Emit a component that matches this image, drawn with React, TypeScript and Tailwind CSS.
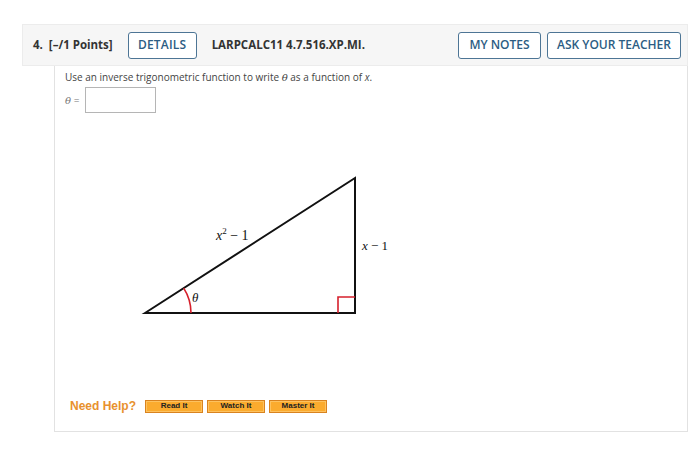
import React from "react";

export default function App() {
  const sans = { fontFamily: '"Open Sans", "Noto Sans", sans-serif' };
  return (
    <div className="w-[700px] h-[467px] bg-white overflow-hidden" style={sans}>
      <div className="pt-[24px]">
        {/* Header */}
        <div className="ml-[22px] w-[666px] h-[42px] bg-[#f6f6f6] border border-[#ececec] flex items-center pl-[10px] pr-[6px]">
          <span className="text-[11.5px] font-bold text-[#333] whitespace-pre">4.  [–/1 Points]</span>
          <button className="ml-[15px] h-[27px] w-[69px] border border-[#4d7595] rounded-[3px] bg-white text-[12px] font-semibold text-[#2c5d84] tracking-[0.2px]">
            DETAILS
          </button>
          <span className="ml-[15px] text-[11.5px] font-bold text-[#333]">LARPCALC11 4.7.516.XP.MI.</span>
          <div className="ml-auto flex gap-[6px]">
            <button className="h-[27px] w-[83px] border border-[#4d7595] rounded-[3px] bg-white text-[12px] font-semibold text-[#2c5d84]">
              MY NOTES
            </button>
            <button className="h-[27px] w-[134px] border border-[#4d7595] rounded-[3px] bg-white text-[12px] font-semibold text-[#2c5d84]">
              ASK YOUR TEACHER
            </button>
          </div>
        </div>

        {/* Content */}
        <div className="ml-[54px] w-[634px] h-[366px] border-l border-r border-b border-[#e2e2e2] pl-[10px] pt-[4px] flex flex-col">
          <p className="text-[10px] leading-[14px] text-[#444]">
            Use an inverse trigonometric function to write{" "}
            <span className="italic" style={{ fontFamily: '"DejaVu Serif", serif' }}>θ</span> as a function of{" "}
            <span className="italic">x</span>.
          </p>
          <div className="flex items-center mt-[2px] h-[26px]">
            <span className="text-[10px] text-[#777] w-[20px]">
              <span className="italic" style={{ fontFamily: '"DejaVu Serif", serif' }}>θ</span> =
            </span>
            <div className="w-[71px] h-[26px] border border-[#b5b5b5] bg-white" />
          </div>

          <svg width="350" height="200" className="ml-[65px] mt-[39px] block" viewBox="0 0 350 200">
            <polygon points="15,161 225,26 225,161" fill="none" stroke="#111" strokeWidth="2" strokeLinejoin="miter" />
            <path d="M 61 161 A 46 46 0 0 0 53.7 136.1" fill="none" stroke="#d6202c" strokeWidth="1.6" />
            <polyline points="208,161 208,145 225,145" fill="none" stroke="#d6202c" strokeWidth="1.6" />
            <text x="86" y="88" fontSize="14" fill="#111" style={{ fontFamily: '"Liberation Serif", serif' }}>
              <tspan fontStyle="italic">x</tspan>
              <tspan dy="-6" fontSize="9">2</tspan>
              <tspan dy="6"> − 1</tspan>
            </text>
            <text x="232" y="98" fontSize="13" fill="#111" style={{ fontFamily: '"Liberation Serif", serif' }}>
              <tspan fontStyle="italic">x</tspan>
              <tspan> − 1</tspan>
            </text>
            <text x="62" y="150" fontSize="13" fontStyle="italic" fill="#111" style={{ fontFamily: '"Liberation Serif", serif' }}>
              θ
            </text>
          </svg>

          <div className="flex items-center mt-[45px] pl-[5px]" style={{ fontFamily: '"Liberation Sans", Arial, sans-serif' }}>
            <span className="text-[12px] font-bold text-[#e8912e]">Need Help?</span>
            <div className="flex gap-[4px] ml-[9px]">
              <button className="w-[58px] h-[13px] bg-[#fbab2e] border border-[#d9831f] text-[8px] font-bold text-[#222] leading-none shadow-[inset_0_0_0_1px_#fdc25f]">
                Read It
              </button>
              <button className="w-[58px] h-[13px] bg-[#fbab2e] border border-[#d9831f] text-[8px] font-bold text-[#222] leading-none shadow-[inset_0_0_0_1px_#fdc25f]">
                Watch It
              </button>
              <button className="w-[58px] h-[13px] bg-[#fbab2e] border border-[#d9831f] text-[8px] font-bold text-[#222] leading-none shadow-[inset_0_0_0_1px_#fdc25f]">
                Master It
              </button>
            </div>
          </div>
        </div>
      </div>
    </div>
  );
}
